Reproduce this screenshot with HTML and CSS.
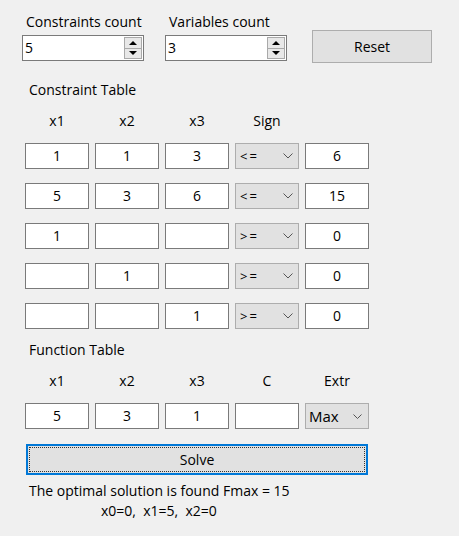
FILE: index.html
```html
<!DOCTYPE html>
<html>
<head>
<meta charset="utf-8">
<link rel="stylesheet" href="styles.css">
</head>
<body>
<div class="app">
  <div class="top">
    <div class="field">
      <div class="lbl">Constraints count</div>
      <div class="spin"><span class="val">5</span>
        <div class="btns">
          <span class="sb"><svg width="8" height="4" viewBox="0 0 8 4"><path d="M0 4 L4 0 L8 4 Z" fill="#000"/></svg></span>
          <span class="sb"><svg width="8" height="4" viewBox="0 0 8 4"><path d="M0 0 L8 0 L4 4 Z" fill="#000"/></svg></span>
        </div>
      </div>
    </div>
    <div class="field">
      <div class="lbl">Variables count</div>
      <div class="spin"><span class="val">3</span>
        <div class="btns">
          <span class="sb"><svg width="8" height="4" viewBox="0 0 8 4"><path d="M0 4 L4 0 L8 4 Z" fill="#000"/></svg></span>
          <span class="sb"><svg width="8" height="4" viewBox="0 0 8 4"><path d="M0 0 L8 0 L4 4 Z" fill="#000"/></svg></span>
        </div>
      </div>
    </div>
    <div class="btn reset">Reset</div>
  </div>

  <div class="section first">Constraint Table</div>
  <div class="grid">
    <div class="hd">x1</div><div class="hd">x2</div><div class="hd">x3</div><div class="hd">Sign</div><div class="hd"></div>

    <div class="cell">1</div><div class="cell">1</div><div class="cell">3</div>
    <div class="sel"><span class="sg">&lt;=</span><svg width="10" height="6" viewBox="0 0 10 6"><path d="M0.5 0.5 L5 5 L9.5 0.5" fill="none" stroke="#555" stroke-width="1"/></svg></div>
    <div class="cell">6</div>

    <div class="cell">5</div><div class="cell">3</div><div class="cell">6</div>
    <div class="sel"><span class="sg">&lt;=</span><svg width="10" height="6" viewBox="0 0 10 6"><path d="M0.5 0.5 L5 5 L9.5 0.5" fill="none" stroke="#555" stroke-width="1"/></svg></div>
    <div class="cell">15</div>

    <div class="cell">1</div><div class="cell"></div><div class="cell"></div>
    <div class="sel"><span class="sg">&gt;=</span><svg width="10" height="6" viewBox="0 0 10 6"><path d="M0.5 0.5 L5 5 L9.5 0.5" fill="none" stroke="#555" stroke-width="1"/></svg></div>
    <div class="cell">0</div>

    <div class="cell"></div><div class="cell">1</div><div class="cell"></div>
    <div class="sel"><span class="sg">&gt;=</span><svg width="10" height="6" viewBox="0 0 10 6"><path d="M0.5 0.5 L5 5 L9.5 0.5" fill="none" stroke="#555" stroke-width="1"/></svg></div>
    <div class="cell">0</div>

    <div class="cell"></div><div class="cell"></div><div class="cell">1</div>
    <div class="sel"><span class="sg">&gt;=</span><svg width="10" height="6" viewBox="0 0 10 6"><path d="M0.5 0.5 L5 5 L9.5 0.5" fill="none" stroke="#555" stroke-width="1"/></svg></div>
    <div class="cell">0</div>
  </div>

  <div class="section second">Function Table</div>
  <div class="grid">
    <div class="hd">x1</div><div class="hd">x2</div><div class="hd">x3</div><div class="hd">C</div><div class="hd">Extr</div>
    <div class="cell">5</div><div class="cell">3</div><div class="cell">1</div><div class="cell"></div>
    <div class="sel max"><span>Max</span><svg width="9" height="5" viewBox="0 0 9 5"><path d="M0.5 0.5 L4.5 4.5 L8.5 0.5" fill="none" stroke="#555" stroke-width="1"/></svg></div>
  </div>

  <div class="btn solve">Solve</div>

  <div class="result">
    <div>The optimal solution is found Fmax = 15</div>
    <div class="l2">x0=0,  x1=5,  x2=0</div>
  </div>
</div>
</body>
</html>
```
FILE: styles.css
```css
* { box-sizing: border-box; margin: 0; padding: 0; }
html, body { background: #f0f0f0; }
body {
  font-family: "Open Sans", "Noto Sans", sans-serif;
  font-size: 14px;
  color: #000;
  width: 459px;
  height: 536px;
  overflow: hidden;
}
.app { padding-top: 13px; }
.top { display: flex; align-items: flex-start; padding-left: 22px; }
.field { display: flex; flex-direction: column; gap: 4px; width: 122px; }
.field + .field { margin-left: 21px; }
.lbl { line-height: 18px; padding-left: 4px; white-space: nowrap; }
.spin {
  height: 26px;
  border: 1px solid #7a7a7a;
  background: #fff;
  display: flex;
  align-items: center;
  justify-content: space-between;
  padding-left: 2px;
}
.val { line-height: 18px; }
.btns { display: flex; flex-direction: column; width: 18px; height: 22px; margin-right: 1px; }
.sb {
  flex: 1;
  border: 1px solid #a9a9a9;
  background: #e8e8e8;
  display: flex;
  align-items: center;
  justify-content: center;
}
.sb + .sb { border-top: none; }
.btn {
  background: #e1e1e1;
  border: 1px solid #adadad;
  display: flex;
  align-items: center;
  justify-content: center;
}
.reset { margin-left: 25px; margin-top: 17px; width: 120px; height: 33px; }
.section { padding-left: 29px; line-height: 18px; }
.section.first { margin-top: 18px; }
.section.second { margin-top: 12px; }
.grid {
  display: grid;
  grid-template-columns: repeat(5, 64px);
  grid-template-rows: 17px;
  grid-auto-rows: 26px;
  column-gap: 6px;
  row-gap: 14px;
  padding-left: 25px;
  margin-top: 13px;
}
.hd { text-align: center; line-height: 17px; }
.cell {
  border: 1px solid #7a7a7a;
  background: #fff;
  text-align: center;
  line-height: 24px;
}
.sel {
  border: 1px solid #adadad;
  background: #e1e1e1;
  display: flex;
  align-items: center;
  justify-content: space-between;
  padding: 0 5px 0 4px;
}
.sg { letter-spacing: 2px; font-size: 13px; }
.max { padding: 0 6px 0 3px; }
.max span { font-size: 15px; }
.solve {
  margin: 15px 0 0 26px;
  width: 342px;
  height: 31px;
  border: 2px solid #0078d7;
  position: relative;
}
.solve::after {
  content: "";
  position: absolute;
  inset: 1px;
  border: 1px dotted #333;
}
.result { margin-top: 6px; padding-left: 29px; line-height: 20px; }
.l2 { padding-left: 72px; white-space: pre; }
```
